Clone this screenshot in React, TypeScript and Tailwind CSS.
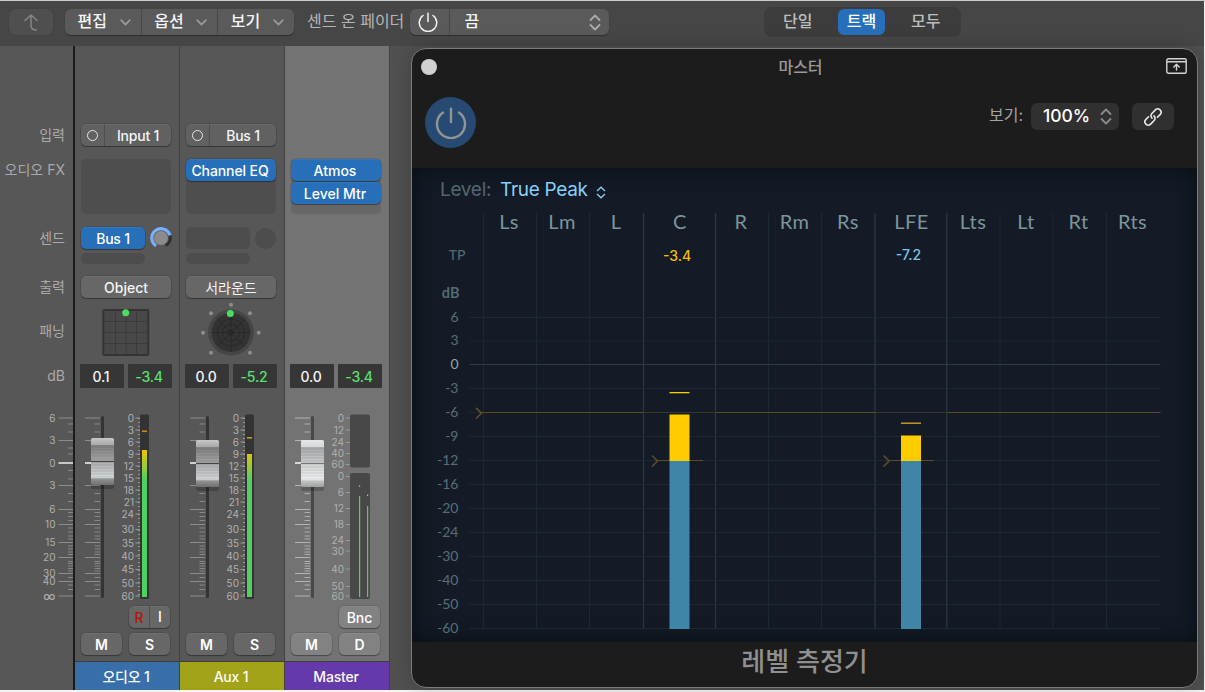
import { ReactNode } from 'react';
import clsx from 'clsx';

interface ChannelMeterProps {
  capY: number;
  barY: number;
  peakY: number;
  peakColor: string;
}

const majorTicks: [string, number][] = [
  ['6', 418], ['3', 440.5], ['0', 463], ['3', 485.5], ['6', 509.5], ['10', 524.5],
  ['15', 542.5], ['20', 557.5], ['30', 573.5], ['40', 581.5], ['∞', 596],
];

const minorTicks = [
  424, 432, 448, 454, 470.5, 479, 493.5, 501.5, 512.5, 516.5, 520.5, 528, 532, 536, 539,
  546, 549, 552, 554.5, 561.5, 563.5, 566, 568.5, 571, 577.5, 585, 589.5,
];

const meterScale: [string, number][] = [
  ['0', 418], ['3', 430], ['6', 442], ['9', 454], ['12', 466], ['15', 478], ['18', 490], ['21', 502],
  ['24', 514], ['30', 529.5], ['35', 543], ['40', 556], ['45', 569.5], ['50', 583], ['60', 596],
];

const masterUpper: [string, number][] = [['0', 418], ['12', 430], ['24', 442.5], ['40', 453.5], ['60', 464.5]];
const masterLower: [string, number][] = [
  ['0', 476.5], ['6', 492.5], ['12', 508.5], ['18', 524.5], ['24', 540.5], ['30', 551], ['40', 569], ['50', 586.5], ['60', 596],
];

const channels: [string, number][] = [
  ['Ls', 509], ['Lm', 562], ['L', 616], ['C', 680], ['R', 741], ['Rm', 794.5],
  ['Rs', 848], ['LFE', 911.5], ['Lts', 973], ['Lt', 1026], ['Rt', 1078.5], ['Rts', 1132.5],
];

const columnLines: [number, boolean][] = [
  [483.5, false], [536.5, false], [589.5, false], [643.5, true], [715.5, true], [768.5, false],
  [821.5, false], [875, true], [946.8, true], [1000, false], [1053, false], [1106.5, false],
];

const dbRows: [string, number][] = [
  ['6', 317.5], ['3', 341], ['0', 364.5], ['-3', 388.5], ['-6', 412.5], ['-9', 436.5], ['-12', 460.5],
  ['-16', 484.5], ['-20', 508.5], ['-24', 532.5], ['-30', 556.5], ['-40', 580.5], ['-50', 604.5], ['-60', 628.5],
];

const Chevron = () => (
  <svg className="w-[11px] h-[7px]" viewBox="0 0 11 7" fill="none" stroke="#999" strokeWidth={1.8} strokeLinecap="round" strokeLinejoin="round">
    <path d="M1.2 1.2 5.5 5.6 9.8 1.2" />
  </svg>
);

const UpDown = ({ className }: { className?: string }) => (
  <svg className={clsx('w-[12px] h-[17px]', className)} viewBox="0 0 12 17" fill="none" stroke="currentColor" strokeWidth={1.8} strokeLinecap="round" strokeLinejoin="round">
    <path d="M1.5 6 6 1.5 10.5 6M1.5 11 6 15.5 10.5 11" />
  </svg>
);

const Power = ({ className }: { className?: string }) => (
  <svg className={className} viewBox="0 0 32 32" fill="none" stroke="currentColor" strokeWidth={2.4} strokeLinecap="round">
    <path d="M16 1.8V15M8 5.6A14 14 0 1 0 24 5.6" />
  </svg>
);

const StripButton = ({ children, className }: { children: ReactNode; className?: string }) => (
  <div className={clsx('h-[22px] rounded-[5px] flex items-center justify-center text-[14px] shadow-[0_1px_1px_rgba(0,0,0,0.3),0_0_0_0.5px_rgba(0,0,0,0.2),inset_0_1px_0_rgba(255,255,255,0.06)]', className)}>
    {children}
  </div>
);

const InputSlot = ({ name }: { name: string }) => (
  <StripButton className="bg-[#616161] text-gray-100 font-medium">
    <div className="w-6 h-full flex items-center justify-center border-r border-[#505050]">
      <span className="w-[11px] h-[11px] rounded-full border-[1.5px] border-gray-200" />
    </div>
    <span className="flex-1 text-center tracking-[-0.2px]">{name}</span>
  </StripButton>
);

const DbValues = ({ gain, peak }: { gain: string; peak: string }) => (
  <div className="flex gap-1 -mx-px h-6 text-[14px] font-medium tracking-[-0.2px]">
    <div className="flex-1 bg-[#363636] rounded-[1px] flex items-center justify-center pr-[2px] text-gray-100">{gain}</div>
    <div className="flex-1 bg-[#363636] rounded-[1px] flex items-center justify-center pr-[2px] text-[#5ae06f]">{peak}</div>
  </div>
);

const Fader = ({ capY, light }: { capY: number; light?: boolean }) => {
  const top = capY - 388;
  const tick = light ? '#b4b4b4' : '#8d8d8d';
  return (
    <>
      {majorTicks.map(([label, y], i) => (
        <path key={i} d={`M10 ${y - 388}H25`} stroke={label === '0' ? '#eee' : tick} strokeWidth={label === '0' ? 1.6 : 1} />
      ))}
      {minorTicks.map((y) => (
        <path key={y} d={`M19.5 ${y - 388}H25`} stroke={tick} strokeWidth={0.9} />
      ))}
      <rect x="26" y="28" width="3" height="182" rx="1.5" fill={light ? '#484848' : '#343434'} />
      <rect x="16" y={top + 3} width="23" height="48" rx="2" fill="#000" opacity="0.2" />
      <rect x="16" y={top} width="23" height="47" rx="1.5" fill={light ? 'url(#capLight)' : 'url(#cap)'} />
      {[9, 12, 15, 18, 21, 27, 30, 33, 36, 39].map((d) => (
        <path key={d} d={`M16 ${top + d}h23`} stroke="#000" strokeOpacity="0.1" strokeWidth={1} />
      ))}
      <path d={`M16 ${top + 23.5}h23`} stroke={light ? '#777' : '#444'} strokeWidth={1.2} />
    </>
  );
};

const Scale = ({ rows, x }: { rows: [string, number][]; x: number }) => (
  <>
    {rows.map(([label, y], i) => (
      <g key={i}>
        <text x={x} y={y - 388 + 3.5} textAnchor="end" fontSize="10" fill="#b0b0b0">{label}</text>
        <path d={`M${x + 1.5} ${y - 388}h4.5`} stroke="#999" strokeWidth={1} />
      </g>
    ))}
  </>
);

const ChannelMeter = ({ capY, barY, peakY, peakColor }: ChannelMeterProps) => (
  <svg className="-ml-[6px] w-[104px] h-[218px] block" viewBox="0 0 104 218">
    <Fader capY={capY} />
    <Scale rows={meterScale} x={59} />
    <path d="M64 30V208" stroke="#969696" strokeWidth={2} strokeDasharray="1 3" />
    <rect x="65" y="26.5" width="9" height="184.5" rx="1.5" fill="#333" />
    <rect x="67" y={barY - 388} width="5" height={597 - barY} fill="url(#level)" />
    <rect x="67" y={peakY - 388} width="5" height="1.6" fill={peakColor} />
  </svg>
);

const MasterMeter = () => (
  <svg className="-ml-[6px] w-[104px] h-[218px] block" viewBox="0 0 104 218">
    <Fader capY={440} light />
    <Scale rows={masterUpper} x={59} />
    <Scale rows={masterLower} x={59} />
    <rect x="65" y="26.5" width="20" height="53" rx="2" fill="#484848" />
    <rect x="65" y="85" width="20" height="126" rx="2" fill="#484848" />
    <rect x="74" y="108" width="1.2" height="101" fill="url(#level)" />
    <rect x="82" y="118" width="1.2" height="91" fill="url(#level)" />
    <rect x="74" y="97.3" width="1.2" height="1.5" fill="#f0a010" />
    <rect x="82" y="106.5" width="1.2" height="1.5" fill="#f0b010" />
  </svg>
);

const Strip = ({ children, footer, footerColor, selected }: { children: ReactNode; footer: string; footerColor: string; selected?: boolean }) => (
  <div className={clsx('w-[105px] shrink-0 border-r border-[#424242] flex flex-col', selected ? 'bg-[#737373]' : 'bg-[#575757]')}>
    <div className="pl-[6px] pr-2 pt-[78px] flex-1">{children}</div>
    <div className={clsx('h-[29px] border-t border-[#3e3e3e] flex items-center justify-center text-[14px] font-medium tracking-[-0.2px] text-gray-50 pr-[2px]', footerColor)}>
      {footer}
    </div>
  </div>
);

const PanPad = () => (
  <svg className="-ml-[6px] w-[104px] h-[66px] block" viewBox="0 0 104 66">
    <rect x="28.3" y="12" width="45" height="45" rx="1" fill="#484848" stroke="#343434" strokeWidth={2} />
    <path d="M40.5 13V56M51 13V56M61.5 13V56M29.5 23.5H72.5M29.5 34.5H72.5M29.5 45.5H72.5" stroke="#3a3a3a" strokeWidth={0.9} />
    <circle cx="50.7" cy="14.7" r="3.5" fill="#4ade60" />
  </svg>
);

const PanSurround = () => (
  <svg className="-ml-[6px] w-[104px] h-[66px] block" viewBox="0 0 104 66">
    <circle cx="51" cy="34.5" r="23" fill="#464646" />
    <circle cx="51" cy="34.5" r="19.5" fill="#333" />
    <g fill="none" stroke="#272727" strokeWidth={0.9}>
      <circle cx="51" cy="34.5" r="13.5" />
      <circle cx="51" cy="34.5" r="8.5" />
      <path d="M51 15V54M31.5 34.5H70.5M37.2 20.7 64.8 48.3M64.8 20.7 37.2 48.3" />
    </g>
    <circle cx="51" cy="34.5" r="3" fill="#272727" />
    {[[51, 6.7], [70, 15.3], [31, 15.3], [23, 34.7], [78.7, 34.7], [31, 54.7], [70, 54.7]].map(([x, y]) => (
      <circle key={`${x}-${y}`} cx={x} cy={y} r="2" fill="#8e8e8e" />
    ))}
    <circle cx="50.3" cy="15.4" r="3.5" fill="#4ade60" />
  </svg>
);

const LabelColumn = () => (
  <div className="w-[73px] shrink-0 bg-[#575757] text-[#a9a9a9] text-[14px] text-right">
    <div className="pr-[8px]">
      <div className="h-[22px] leading-[22px] mt-[78px]">입력</div>
      <div className="h-[22px] leading-[22px] mt-[13px] whitespace-nowrap">오디오 FX</div>
      <div className="h-[22px] leading-[22px] mt-[46px]">센드</div>
      <div className="h-[22px] leading-[22px] mt-[27px]">출력</div>
      <div className="h-[22px] leading-[22px] mt-[22px]">패닝</div>
      <div className="h-6 leading-6 mt-[22px]">dB</div>
    </div>
    <svg className="w-[73px] h-[218px] block" viewBox="0 0 73 218">
      {majorTicks.map(([label, y], i) => (
        <g key={i}>
          <text x="55.5" y={y - 388 + (label === '∞' ? 4.5 : 3.5)} textAnchor="end" fontSize={label === '∞' ? 13 : 10} fill="#b0b0b0">{label}</text>
          <path d={`M58.5 ${y - 388}H73`} stroke={label === '0' ? '#e5e5e5' : '#8d8d8d'} strokeWidth={label === '0' ? 1.6 : 1} />
        </g>
      ))}
      {minorTicks.map((y) => (
        <path key={y} d={`M68 ${y - 388}H73`} stroke="#8d8d8d" strokeWidth={0.9} />
      ))}
    </svg>
  </div>
);

const Toolbar = () => (
  <div className="h-[45px] shrink-0 bg-[#464646] flex items-start pt-2 text-[16px] font-medium">
    <div className="ml-[9px] w-[44px] h-[26px] rounded-md bg-[#4f4f4f] flex items-center justify-center shadow-[0_0_1px_rgba(0,0,0,0.3)]">
      <svg className="w-[14px] h-[17px]" viewBox="0 0 14 17" fill="none" stroke="#858585" strokeWidth={1.5} strokeLinecap="round" strokeLinejoin="round">
        <path d="M1 6.5 7 1 13 6.5M7 1V11.5Q7 16 12.5 16" />
      </svg>
    </div>
    <div className="ml-3 w-[229px] h-[26px] rounded-md bg-[#5a5a5a] flex text-gray-100 shadow-[0_1px_1px_rgba(0,0,0,0.35)]">
      {['편집', '옵션', '보기'].map((name, i) => (
        <div key={name} className={clsx('flex-1 flex items-center justify-between pl-[12.5px] pr-[10px]', i > 0 && 'border-l border-[#484848]')}>
          <span className="leading-[22px] pb-[2px]">{name}</span>
          <Chevron />
        </div>
      ))}
    </div>
    <span className="ml-[13px] w-[102.5px] h-[26px] leading-[24px] font-normal text-[#b5b5b5] whitespace-nowrap">센드 온 페이더</span>
    <div className="w-[199px] h-[26px] rounded-md bg-[#5a5a5a] flex items-center text-gray-100 shadow-[0_1px_1px_rgba(0,0,0,0.35)]">
      <div className="w-10 h-full border-r border-[#484848] flex items-center justify-center">
        <Power className="w-5 h-5 -ml-[2px]" />
      </div>
      <span className="pl-[15px] flex-1 leading-[22px] pb-[2px]">끔</span>
      <UpDown className="mr-2 text-[#aaa]" />
    </div>
    <div className="ml-[155.5px] -mt-[2px] w-[197px] h-[30px] rounded-lg bg-[#3c3c3c] flex items-center text-[#bdbdbd]">
      <span className="w-[74px] pl-[19px] leading-[22px] pb-[2px]">단일</span>
      <div className="w-[47px] h-[26px] rounded-md bg-[#276fbb] text-white flex justify-center leading-[24px]">트랙</div>
      <span className="pl-[26px] leading-[22px] pb-[2px]">모두</span>
    </div>
  </div>
);

const LevelDisplay = () => (
  <svg className="w-[785px] h-[474px] block font-['Lato','Noto_Sans',sans-serif]" viewBox="412 168 785 474">
    {columnLines.map(([x, bright]) => (
      <path key={x} d={`M${x} 213V629`} stroke={bright ? '#2a3941' : '#1b2932'} strokeWidth={bright ? 1.3 : 1} />
    ))}
    {dbRows.map(([label, y]) => (
      <g key={label}>
        <path d={`M469.5 ${y}H1160.5`} stroke={label === '0' ? '#2c3d46' : '#1b2932'} strokeWidth={1} />
        <text x="458.5" y={y + 4.3} textAnchor="end" fontSize="14" fill={label === '0' ? '#8aa8ad' : '#566f76'}>{label}</text>
      </g>
    ))}
    {channels.map(([name, x]) => (
      <text key={name} x={x} y="228.5" textAnchor="middle" fontSize="20" letterSpacing="0.4" fill="#7a969b">{name}</text>
    ))}
    <text x="465.5" y="260" textAnchor="end" fontSize="14" fontWeight="500" fill="#506870">TP</text>
    <text x="459.5" y="297.5" textAnchor="end" fontSize="14.5" fontWeight="700" fill="#536b72">dB</text>
    <g className="font-['Inter',sans-serif]" fontSize="14" fontWeight="500" textAnchor="middle">
      <text x="677" y="261" fill="#f2bd0c">-3.4</text>
      <text x="908.5" y="260" fill="#7cc4ea">-7.2</text>
    </g>

    {/* thresholds */}
    <g fill="none" stroke="#5a4e26" strokeWidth={1.2}>
      <path d="M482 412.5H643M715.5 412.5H875M947.5 412.5H1160.5M657 460.5H703M889 460.5H934" />
      <path d="M643 412.5H715.5M875 412.5H947.5" stroke="#39362a" />
      <path d="M476 408 481.5 413 476 418.5M652 455.5 657.5 461 652 466.5M883.5 455.5 889 461 883.5 466.5" strokeWidth={1.7} />
    </g>

    <rect x="669.5" y="414.5" width="20" height="46.5" fill="#ffcc00" />
    <rect x="669.5" y="461" width="20" height="168" fill="#3f85a7" />
    <rect x="669.5" y="392" width="20" height="1.3" fill="#ffcc00" />
    <rect x="901" y="435.5" width="20" height="25.5" fill="#ffcc00" />
    <rect x="901" y="461" width="20" height="168" fill="#3f85a7" />
    <rect x="901" y="422.5" width="20" height="1.4" fill="#c9a21a" />
  </svg>
);

const PluginWindow = () => (
  <div className="w-[787px] h-[640px] rounded-[15px] border border-[#7b7b7b] bg-[#1c1c1c] flex flex-col overflow-hidden shadow-[0_0_18px_rgba(0,0,0,0.2)]">
    <div className="h-[36px] grid grid-cols-3 items-center pl-[9px] pr-[10px]">
      <span className="w-4 h-4 rounded-full bg-[#d0d0d0]" />
      <span className="text-center text-[16px] font-medium text-[#999] leading-[36px] pr-[7px]">마스터</span>
      <svg className="w-[21px] h-4 justify-self-end mb-[3px]" viewBox="0 0 21 16" fill="none" stroke="#d4d4d4" strokeWidth={1.4} strokeLinecap="round" strokeLinejoin="round">
        <rect x="0.8" y="0.8" width="19.4" height="14.4" rx="1.5" />
        <path d="M1 3.8H20M10.5 12V6.6M7.8 9 10.5 6.3 13.2 9" />
      </svg>
    </div>
    <div className="h-[83px] flex items-start pl-[13px] pr-[23px] pt-3">
      <div className="w-[51px] h-[51px] rounded-full bg-[#264a72] flex items-center justify-center">
        <Power className="w-8 h-8 text-[#949494]" />
      </div>
      <div className="ml-auto mt-[6px] flex items-center">
        <span className="text-[16px] text-[#a3a3a3] mr-2 leading-[22px] pb-[3px]">보기:</span>
        <div className="w-[88px] h-[27px] rounded-md bg-[#303030] flex items-center justify-between pl-[12px] pr-[7px] text-white text-[17.5px] font-medium">
          <span>100%</span>
          <UpDown className="text-[#8b8b8b]" />
        </div>
        <div className="ml-[13px] w-[42px] h-[27px] rounded-md bg-[#303030] flex items-center justify-center">
          <svg className="w-5 h-5" viewBox="0 0 20 20" fill="none" stroke="#e8e8e8" strokeWidth={1.6} strokeLinecap="round">
            <g transform="rotate(-45 10 10)">
              <path d="M11.5 9.9A3.3 3.3 0 0 1 8.3 13.3H3.3A3.3 3.3 0 0 1 3.3 6.7H7" />
              <path d="M8.5 10.1A3.3 3.3 0 0 1 11.7 6.7H16.7A3.3 3.3 0 0 1 16.7 13.3H13" />
            </g>
          </svg>
        </div>
      </div>
    </div>
    <div className="h-[474px] relative bg-[#141b26] shadow-[inset_0_0_24px_rgba(4,10,14,0.75)]">
      <LevelDisplay />
      <div className="absolute left-[28px] top-[8px] flex items-center text-[19px] tracking-[-0.3px]">
        <span className="text-[#53666e] w-[60px]">Level:</span>
        <span className="text-[#86d0f6]">True Peak</span>
        <svg className="ml-2 mt-1 w-[10px] h-[13px]" viewBox="0 0 10 13" fill="none" stroke="#86d0f6" strokeWidth={1.3}>
          <path d="M1 5 5 1.2 9 5M1 8 5 11.8 9 8" />
        </svg>
      </div>
    </div>
    <div className="flex-1 flex justify-center text-[26px] leading-[40px] font-medium text-[#909090]">레벨 측정기</div>
  </div>
);

export default function App() {
  return (
    <div className="w-[1205px] h-[692px] bg-[#f4f4f4] border-t border-[#c9cdcb] overflow-hidden font-['Inter','Noto_Sans_CJK_KR',sans-serif]">
      <svg className="absolute w-0 h-0">
        <defs>
          <linearGradient id="cap" x1="0" y1="0" x2="0" y2="1">
            <stop offset="0" stopColor="#c8c8c8" />
            <stop offset="0.14" stopColor="#aaa" />
            <stop offset="0.16" stopColor="#808080" />
            <stop offset="0.47" stopColor="#a4a4a4" />
            <stop offset="0.53" stopColor="#aeb0b1" />
            <stop offset="0.84" stopColor="#d3d8da" />
            <stop offset="0.87" stopColor="#929292" />
            <stop offset="1" stopColor="#707070" />
          </linearGradient>
          <linearGradient id="capLight" x1="0" y1="0" x2="0" y2="1">
            <stop offset="0" stopColor="#e6e8e8" />
            <stop offset="0.14" stopColor="#d5d8d8" />
            <stop offset="0.16" stopColor="#a9acad" />
            <stop offset="0.47" stopColor="#c8cacb" />
            <stop offset="0.53" stopColor="#d2d4d4" />
            <stop offset="0.84" stopColor="#eef1f2" />
            <stop offset="0.87" stopColor="#c2c4c4" />
            <stop offset="1" stopColor="#a0a0a0" />
          </linearGradient>
          <linearGradient id="level" gradientUnits="userSpaceOnUse" x1="0" y1="62" x2="0" y2="210">
            <stop offset="0" stopColor="#f0c400" />
            <stop offset="0.2" stopColor="#4fd162" />
            <stop offset="1" stopColor="#4fd162" />
          </linearGradient>
        </defs>
      </svg>

      <div className="w-[1204px] h-[689px] flex flex-col">
        <Toolbar />
        <div className="flex-1 min-h-0 flex bg-[#505050]">
          <LabelColumn />
          <div className="flex border-l-2 border-[#1b1b1b]">
            <Strip footer="오디오 1" footerColor="bg-[#386fab]">
              <InputSlot name="Input 1" />
              <div className="mt-[13px] h-[55px] rounded-[5px] bg-[#4e4e4e]" />
              <div className="mt-[13px] flex items-center justify-between">
                <StripButton className="w-16 bg-[#276fb9] text-white font-medium tracking-[-0.2px]">Bus 1</StripButton>
                <svg className="w-[22px] h-[22px] -mr-px" viewBox="0 0 22 22" fill="none">
                  <path d="M15.8 18.5A9 9 0 0 0 20 8.5" stroke="#303030" strokeWidth={3} />
                  <path d="M6 18.8A9.3 9.3 0 1 1 20 8.3" stroke="#76b1ff" strokeWidth={3.2} />
                  <circle cx="11" cy="11" r="7" fill="#8b8b8b" />
                </svg>
              </div>
              <div className="mt-1 w-16 h-[11px] rounded-[5px] bg-[#4d4d4d]" />
              <StripButton className="mt-3 bg-[#676767] text-gray-100 font-medium">Object</StripButton>
              <PanPad />
              <DbValues gain="0.1" peak="-3.4" />
              <ChannelMeter capY={438} barY={450} peakY={430.5} peakColor="#d48a1c" />
              <StripButton className="w-[41px] ml-auto mr-px bg-[#676767] text-white font-medium">
                <span className="flex-1 text-center text-[#b3140c]">R</span>
                <span className="flex-1 h-full leading-[22px] text-center border-l border-[#505050]">I</span>
              </StripButton>
              <div className="mt-[5px] flex justify-between mr-px font-semibold">
                <StripButton className="w-[41px] bg-[#676767] text-white">M</StripButton>
                <StripButton className="w-[41px] bg-[#676767] text-white">S</StripButton>
              </div>
            </Strip>

            <Strip footer="Aux 1" footerColor="bg-[#a3a31a]">
              <InputSlot name="Bus 1" />
              <div className="mt-[13px] h-[55px] rounded-[5px] bg-[#4e4e4e]">
                <StripButton className="bg-[#276fb9] text-white font-medium pr-[2px]">
                  <span className="tracking-[-0.1px]">Channel EQ</span>
                </StripButton>
              </div>
              <div className="mt-[13px] flex items-center justify-between">
                <div className="w-16 h-[22px] rounded-[5px] bg-[#4d4d4d]" />
                <div className="w-[21px] h-[21px] rounded-full bg-[#4d4d4d]" />
              </div>
              <div className="mt-1 w-16 h-[11px] rounded-[5px] bg-[#4d4d4d]" />
              <StripButton className="mt-3 bg-[#676767] text-gray-100">서라운드</StripButton>
              <PanSurround />
              <DbValues gain="0.0" peak="-5.2" />
              <ChannelMeter capY={440} barY={454} peakY={437} peakColor="#c9a01c" />
              <div className="mt-[27px] flex justify-between mr-px font-semibold">
                <StripButton className="w-[41px] bg-[#676767] text-white">M</StripButton>
                <StripButton className="w-[41px] bg-[#676767] text-white">S</StripButton>
              </div>
            </Strip>

            <Strip footer="Master" footerColor="bg-[#6639aa]" selected>
              <div className="mt-[35px] h-[55px] rounded-[5px] bg-[#676767] flex flex-col gap-px font-medium">
                <StripButton className="bg-[#276fb9] text-white pr-[2px]">Atmos</StripButton>
                <StripButton className="bg-[#276fb9] text-white pr-[2px]">Level Mtr</StripButton>
              </div>
              <div className="mt-[150px]">
                <DbValues gain="0.0" peak="-3.4" />
              </div>
              <MasterMeter />
              <StripButton className="w-[41px] ml-auto mr-px bg-[#828282] text-white font-medium">Bnc</StripButton>
              <div className="mt-[5px] flex justify-between mr-px font-semibold">
                <StripButton className="w-[41px] bg-[#828282] text-white">M</StripButton>
                <StripButton className="w-[41px] bg-[#828282] text-white">D</StripButton>
              </div>
            </Strip>
          </div>
          <div className="flex-1 pt-[2px] pl-[21px]">
            <PluginWindow />
          </div>
        </div>
      </div>
    </div>
  );
}
